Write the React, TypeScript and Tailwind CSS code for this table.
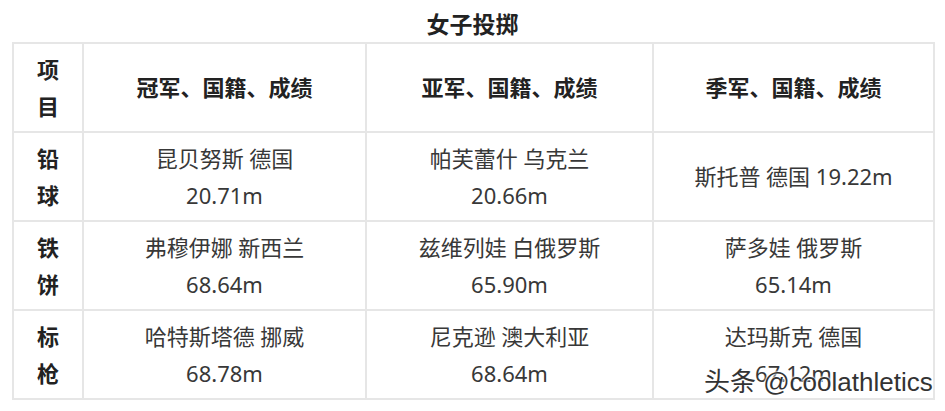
export default function App() {
  const rows = [
    {
      item: "铅球",
      cells: [
        ["昆贝努斯 德国", "20.71m"],
        ["帕芙蕾什 乌克兰", "20.66m"],
        ["斯托普 德国 19.22m"],
      ],
    },
    {
      item: "铁饼",
      cells: [
        ["弗穆伊娜 新西兰", "68.64m"],
        ["兹维列娃 白俄罗斯", "65.90m"],
        ["萨多娃 俄罗斯", "65.14m"],
      ],
    },
    {
      item: "标枪",
      cells: [
        ["哈特斯塔德 挪威", "68.78m"],
        ["尼克逊 澳大利亚", "68.64m"],
        ["达玛斯克 德国", "67.12m"],
      ],
    },
  ];

  return (
    <div
      className="relative w-[945px] h-[411px] bg-white overflow-hidden pt-[6px]"
      style={{ fontFamily: '"Noto Sans", "Noto Sans CJK SC", sans-serif' }}
    >
      {/* 标题 */}
      <div className="h-[36px] flex items-center justify-center text-[23px] font-bold text-[#222]">
        女子投掷
      </div>

      <table className="ml-[12px] w-[921px] table-fixed border-collapse text-center">
        <colgroup>
          <col className="w-[70px]" />
          <col className="w-[283px]" />
          <col className="w-[287px]" />
          <col className="w-[281px]" />
        </colgroup>
        <tbody>
          <tr className="h-[89px]">
            <td className="border-2 border-[#e6e6e6] px-[20px] text-[22px] leading-[37px] font-bold text-[#222]">
              项目
            </td>
            {["冠军、国籍、成绩", "亚军、国籍、成绩", "季军、国籍、成绩"].map((h) => (
              <td
                key={h}
                className="border-2 border-[#e6e6e6] text-[22px] leading-[37px] font-bold text-[#222]"
              >
                {h}
              </td>
            ))}
          </tr>
          {rows.map((r) => (
            <tr key={r.item} className="h-[89px]">
              <td className="border-2 border-[#e6e6e6] px-[20px] text-[22px] leading-[37px] font-bold text-[#222]">
                {r.item}
              </td>
              {r.cells.map((c, i) => (
                <td
                  key={i}
                  className="border-2 border-[#e6e6e6] text-[22px] leading-[37px] text-[#383838]"
                >
                  {c.map((line) => (
                    <div key={line}>{line}</div>
                  ))}
                </td>
              ))}
            </tr>
          ))}
        </tbody>
      </table>

      {/* 水印 */}
      <div
        className="absolute left-[704px] top-[365px] text-[26px] leading-[34px] text-[#333] whitespace-nowrap"
        style={{
          fontFamily: '"Liberation Sans", "Noto Sans CJK SC", sans-serif',
          textShadow: "0 0 2px #fff, 0 0 2px #fff, 0 0 3px #fff",
        }}
      >
        头条 @coolathletics
      </div>
    </div>
  );
}
